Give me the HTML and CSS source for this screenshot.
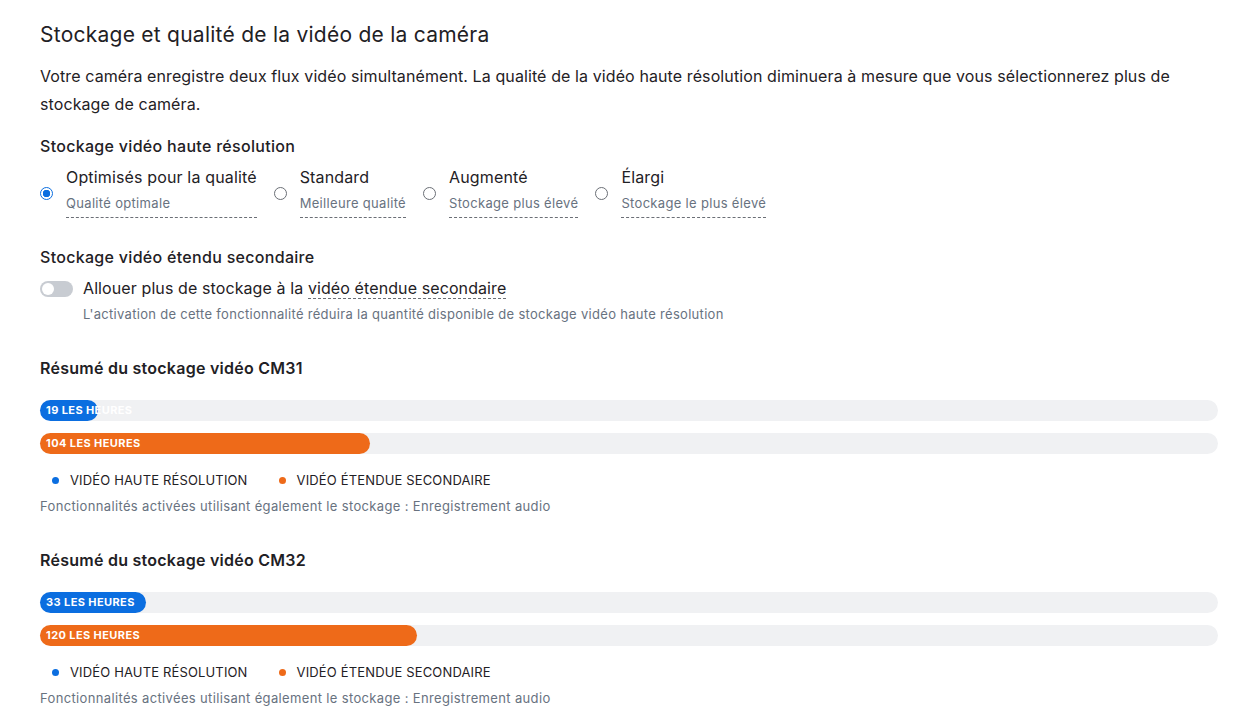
FILE: index.html
```html
<!DOCTYPE html>
<html lang="fr">
<head>
<meta charset="utf-8">
<link rel="stylesheet" href="styles.css">
</head>
<body>
<main class="page">
  <h1 class="title">Stockage et qualité de la vidéo de la caméra</h1>
  <p class="intro">Votre caméra enregistre deux flux vidéo simultanément. La qualité de la vidéo haute résolution diminuera à mesure que vous sélectionnerez plus de stockage de caméra.</p>

  <h2 class="section-label">Stockage vidéo haute résolution</h2>
  <div class="options">
    <label class="option">
      <span class="radio checked"></span>
      <span class="opt-text">
        <span class="opt-title">Optimisés pour la qualité</span>
        <span class="opt-sub">Qualité optimale</span>
      </span>
    </label>
    <label class="option">
      <span class="radio"></span>
      <span class="opt-text">
        <span class="opt-title">Standard</span>
        <span class="opt-sub">Meilleure qualité</span>
      </span>
    </label>
    <label class="option">
      <span class="radio"></span>
      <span class="opt-text">
        <span class="opt-title">Augmenté</span>
        <span class="opt-sub">Stockage plus élevé</span>
      </span>
    </label>
    <label class="option">
      <span class="radio"></span>
      <span class="opt-text">
        <span class="opt-title">Élargi</span>
        <span class="opt-sub">Stockage le plus élevé</span>
      </span>
    </label>
  </div>

  <h2 class="section-label second">Stockage vidéo étendu secondaire</h2>
  <div class="toggle-row">
    <span class="toggle"><span class="knob"></span></span>
    <div class="toggle-text">
      <div class="toggle-label">Allouer plus de stockage à la <span class="dotted">vidéo étendue secondaire</span></div>
      <div class="toggle-sub">L'activation de cette fonctionnalité réduira la quantité disponible de stockage vidéo haute résolution</div>
    </div>
  </div>

  <section class="summary">
    <h3 class="summary-title">Résumé du stockage vidéo CM31</h3>
    <div class="bars">
      <div class="track"><div class="fill blue" style="width:58px"></div><span class="bar-text">19 LES HEURES</span></div>
      <div class="track"><div class="fill orange" style="width:330px"></div><span class="bar-text">104 LES HEURES</span></div>
    </div>
    <div class="legend">
      <span class="legend-item"><span class="dot blue"></span>VIDÉO HAUTE RÉSOLUTION</span>
      <span class="legend-item"><span class="dot orange"></span>VIDÉO ÉTENDUE SECONDAIRE</span>
    </div>
    <p class="note">Fonctionnalités activées utilisant également le stockage : Enregistrement audio</p>
  </section>

  <section class="summary">
    <h3 class="summary-title">Résumé du stockage vidéo CM32</h3>
    <div class="bars">
      <div class="track"><div class="fill blue" style="width:106px"></div><span class="bar-text">33 LES HEURES</span></div>
      <div class="track"><div class="fill orange" style="width:377px"></div><span class="bar-text">120 LES HEURES</span></div>
    </div>
    <div class="legend">
      <span class="legend-item"><span class="dot blue"></span>VIDÉO HAUTE RÉSOLUTION</span>
      <span class="legend-item"><span class="dot orange"></span>VIDÉO ÉTENDUE SECONDAIRE</span>
    </div>
    <p class="note">Fonctionnalités activées utilisant également le stockage : Enregistrement audio</p>
  </section>
</main>
</body>
</html>
```

FILE: styles.css
```css
* { box-sizing: border-box; }
html, body { margin: 0; padding: 0; background: #fff; }
body {
  font-family: Inter, "Liberation Sans", Arial, sans-serif;
  color: #1f2125;
  -webkit-font-smoothing: antialiased;
}
.page {
  padding: 21px 18px 0 40px;
}
.title {
  margin: 0;
  font-size: 21px;
  font-weight: 400;
  line-height: 28px;
  letter-spacing: 0.25px;
  color: #1f2125;
}
.intro {
  margin: 13px 0 0;
  font-size: 16px;
  line-height: 28px;
  letter-spacing: 0.1px;
  color: #1f2125;
}
.section-label {
  margin: 18px 0 0;
  font-size: 16px;
  font-weight: 500;
  line-height: 20px;
  letter-spacing: 0.3px;
}
.section-label.second { margin-top: 29px; }

.options {
  display: flex;
  gap: 17px;
  margin-top: 11px;
}
.option {
  display: flex;
  align-items: center;
  gap: 13px;
}
.radio {
  width: 13px;
  height: 13px;
  border-radius: 50%;
  border: 1px solid #6b6f76;
  background: #fff;
  flex: none;
  margin-top: 2px;
}
.radio.checked {
  border: 1.5px solid #0b6ee0;
  background: radial-gradient(circle, #0b6ee0 0 3.5px, #fff 4px);
}
.opt-text {
  display: flex;
  flex-direction: column;
}
.opt-title {
  font-size: 16px;
  line-height: 20px;
  letter-spacing: 0.15px;
}
.opt-sub {
  margin-top: 8px;
  font-size: 13px;
  line-height: 17px;
  letter-spacing: 0.32px;
  padding-bottom: 5px;
  color: #68727f;
  border-bottom: 1px dashed #6b6f76;
}

.toggle-row {
  display: flex;
  gap: 10px;
  margin-top: 10px;
  align-items: flex-start;
}
.toggle {
  width: 33px;
  height: 16px;
  border-radius: 8px;
  background: #c8ccd2;
  margin-top: 4px;
  position: relative;
  flex: none;
}
.knob {
  position: absolute;
  left: 2px;
  top: 2px;
  width: 12px;
  height: 12px;
  border-radius: 50%;
  background: #fff;
}
.toggle-label {
  font-size: 16px;
  line-height: 22px;
  letter-spacing: 0.1px;
}
.dotted {
  border-bottom: 1px dashed #6b6f76;
}
.toggle-sub {
  margin-top: 7px;
  font-size: 13px;
  line-height: 17px;
  letter-spacing: 0.3px;
  color: #68727f;
}

.summary { margin-top: 35px; }
.summary + .summary { margin-top: 35px; }
.summary-title {
  margin: 0;
  font-size: 16px;
  font-weight: 600;
  line-height: 20px;
  letter-spacing: 0.25px;
}
.bars {
  display: flex;
  flex-direction: column;
  gap: 12px;
  margin-top: 22px;
}
.track {
  position: relative;
  height: 21px;
  border-radius: 11px;
  background: #f0f1f3;
}
.fill {
  height: 100%;
  border-radius: 11px;
}
.fill.blue { background: #0b6ee0; }
.fill.orange { background: #ee6a19; }
.bar-text {
  position: absolute;
  left: 6px;
  top: 0;
  line-height: 21px;
  font-size: 11px;
  font-weight: 700;
  letter-spacing: 0.4px;
  color: #fff;
}
.legend {
  display: flex;
  gap: 31px;
  margin-top: 17px;
  padding-left: 12px;
}
.legend-item {
  display: flex;
  align-items: center;
  gap: 11px;
  font-size: 13px;
  line-height: 18px;
  letter-spacing: 0.15px;
  color: #1f2125;
}
.dot {
  width: 7px;
  height: 7px;
  border-radius: 50%;
}
.dot.blue { background: #0b6ee0; }
.dot.orange { background: #ee6a19; }
.note {
  margin: 8px 0 0;
  font-size: 13px;
  line-height: 18px;
  letter-spacing: 0.35px;
  color: #68727f;
}
```
